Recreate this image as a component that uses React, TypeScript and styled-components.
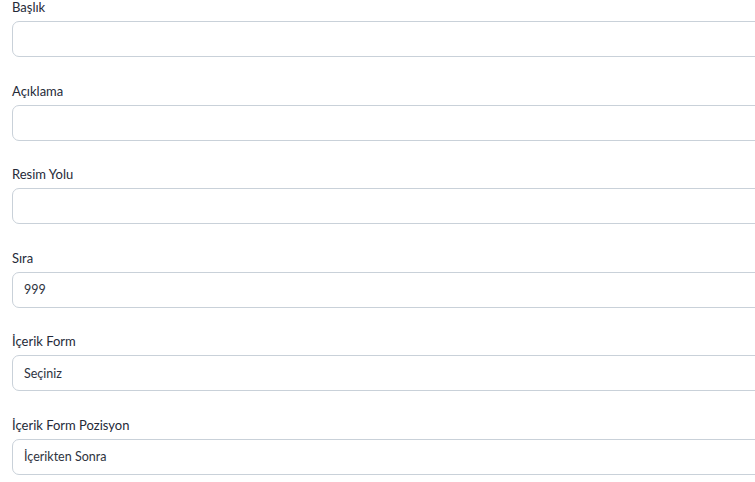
import React from "react";
import styled, { createGlobalStyle } from "styled-components";

const Global = createGlobalStyle`
  html, body { margin: 0; padding: 0; background: #fff; overflow: hidden; height: 482px; }
  body { font-family: Lato, "Noto Sans", sans-serif; }
`;

const Form = styled.form`
  padding: 0 0 0 12px;
  width: 800px;
  display: flex;
  flex-direction: column;
`;

const Group = styled.div`
  display: flex;
  flex-direction: column;
  margin-bottom: 26.6px;
`;

const Label = styled.label`
  font-size: 13px;
  line-height: 15px;
  color: #252a38;
  margin-bottom: 6px;
  font-weight: 400;
`;

const Input = styled.input`
  box-sizing: border-box;
  height: 36px;
  width: 100%;
  border: 1px solid #c9d1d9;
  border-radius: 7px;
  padding: 0 11px;
  font-family: inherit;
  font-size: 12.5px;
  font-weight: 400;
  color: #2e3340;
  background: #fff;
  outline: none;
`;

const fields: { label: string; value: string }[] = [
  { label: "Başlık", value: "" },
  { label: "Açıklama", value: "" },
  { label: "Resim Yolu", value: "" },
  { label: "Sıra", value: "999" },
  { label: "İçerik Form", value: "Seçiniz" },
  { label: "İçerik Form Pozisyon", value: "İçerikten Sonra" },
];

export default function App() {
  return (
    <>
      <Global />
      <Form>
        {fields.map((f) => (
          <Group key={f.label}>
            <Label>{f.label}</Label>
            <Input defaultValue={f.value} readOnly />
          </Group>
        ))}
      </Form>
    </>
  );
}
